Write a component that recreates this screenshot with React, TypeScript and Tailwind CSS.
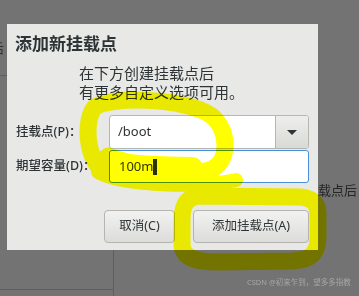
import React from 'react';

const cjk = { fontFamily: '"Noto Sans", "Noto Sans CJK SC", sans-serif' };

function Backdrop() {
  // pieces of the window behind the dialog
  return (
    <>
      <div className="absolute left-0 top-[75px] w-[7px] h-px bg-[#5e5e5e]" />
      <div className="absolute left-[-9px] top-[38px] text-[13px] leading-[20px] text-[#2e3436]" style={cjk}>后</div>
      <div className="absolute left-[113px] top-[250px] w-px h-[46px] bg-[#5e5e5e]" />
      <div className="absolute left-0 top-[289px] w-[113px] h-px bg-[#5e5e5e]" />
      <div className="absolute left-[305px] top-[180px] text-[13px] leading-[20px] text-[#262626] whitespace-nowrap" style={cjk}>
        挂载点后，
      </div>
      <div className="absolute left-[247px] top-[277px] text-[7.5px] leading-[10px] text-[#a6a6a6] whitespace-nowrap" style={cjk}>
        CSDN @初来乍到，望多多指教
      </div>
    </>
  );
}

function Highlighter() {
  return (
    <svg className="absolute inset-0 mix-blend-multiply pointer-events-none" width={359} height={296} viewBox="0 0 359 296">
      <g fill="none" stroke="#ffff00" strokeLinecap="round" strokeLinejoin="round">
        <path strokeWidth={17} d="M104 172 C86 158 84 122 94 108 C106 96 185 97 212 116 C230 132 228 160 214 168 C196 178 150 170 108 156" />
        <path strokeWidth={14} d="M98 172 C122 186 200 188 236 180" />
        <path strokeWidth={22} d="M102 162 C130 166 165 168 192 168" />
        <path strokeWidth={17} d="M300 197 L200 196 C186 197 182 206 182 220 L182 245 C183 258 196 262 218 262 L292 261 C313 260 318 252 318 236 L318 214 C318 203 312 198 300 197" />
      </g>
    </svg>
  );
}

export default function App() {
  return (
    <div className="relative w-[359px] h-[296px] overflow-hidden bg-[#737373]" style={cjk}>
      <Backdrop />

      <div className="relative pt-[24px] pl-[7px]">
        <div className="w-[311px] h-[226px] bg-[#e8e8e7] flex flex-col text-[#2e3436]">
          <h1 className="mt-[9px] ml-[8px] text-[17px] leading-[22px] font-bold">添加新挂载点</h1>

          <div className="mt-[9px] ml-[72px] text-[15px] leading-[19px]">
            <p>在下方创建挂载点后</p>
            <p>有更多自定义选项可用。</p>
          </div>

          <div className="mt-[13px] flex flex-col gap-px">
            <div className="flex items-center">
              <label className="w-[102px] pl-[9px] text-[12.5px] font-medium">挂载点(P)：</label>
              <div className="w-[200px] h-[34px] flex border border-[#b6b6b3] rounded-[3px] bg-white overflow-hidden">
                <div className="flex-1 flex items-center pl-[8px] text-[13px]">/boot</div>
                <div className="w-[33px] flex items-center justify-center border-l border-[#b6b6b3] bg-gradient-to-b from-[#eeeeec] to-[#d9d9d6]">
                  <span className="w-0 h-0 border-l-[5px] border-r-[5px] border-t-[5px] border-l-transparent border-r-transparent border-t-[#2e3436]" />
                </div>
              </div>
            </div>
            <div className="flex items-center">
              <label className="w-[102px] pl-[9px] text-[12.5px] font-medium">期望容量(D)：</label>
              <div className="w-[200px] h-[33px] flex items-center border border-[#4a90d9] rounded-[3px] bg-white pl-[9px] text-[13px]">
                <span>100m</span>
                <span className="w-[4px] h-[16px] bg-[#2e3436]" />
              </div>
            </div>
          </div>

          <div className="mt-[27px] pr-[9px] flex justify-end gap-[18px] text-[12.5px]">
            <button className="w-[71px] h-[33px] border border-[#b4b4b1] rounded-[4px] bg-gradient-to-b from-[#f2f2f0] to-[#dcdcda] text-[#2e3436]">
              取消(C)
            </button>
            <button className="w-[116px] h-[33px] border border-[#b4b4b1] rounded-[4px] bg-gradient-to-b from-[#f2f2f0] to-[#dcdcda] text-[#2e3436]">
              添加挂载点(A)
            </button>
          </div>
        </div>
      </div>

      <Highlighter />
    </div>
  );
}
